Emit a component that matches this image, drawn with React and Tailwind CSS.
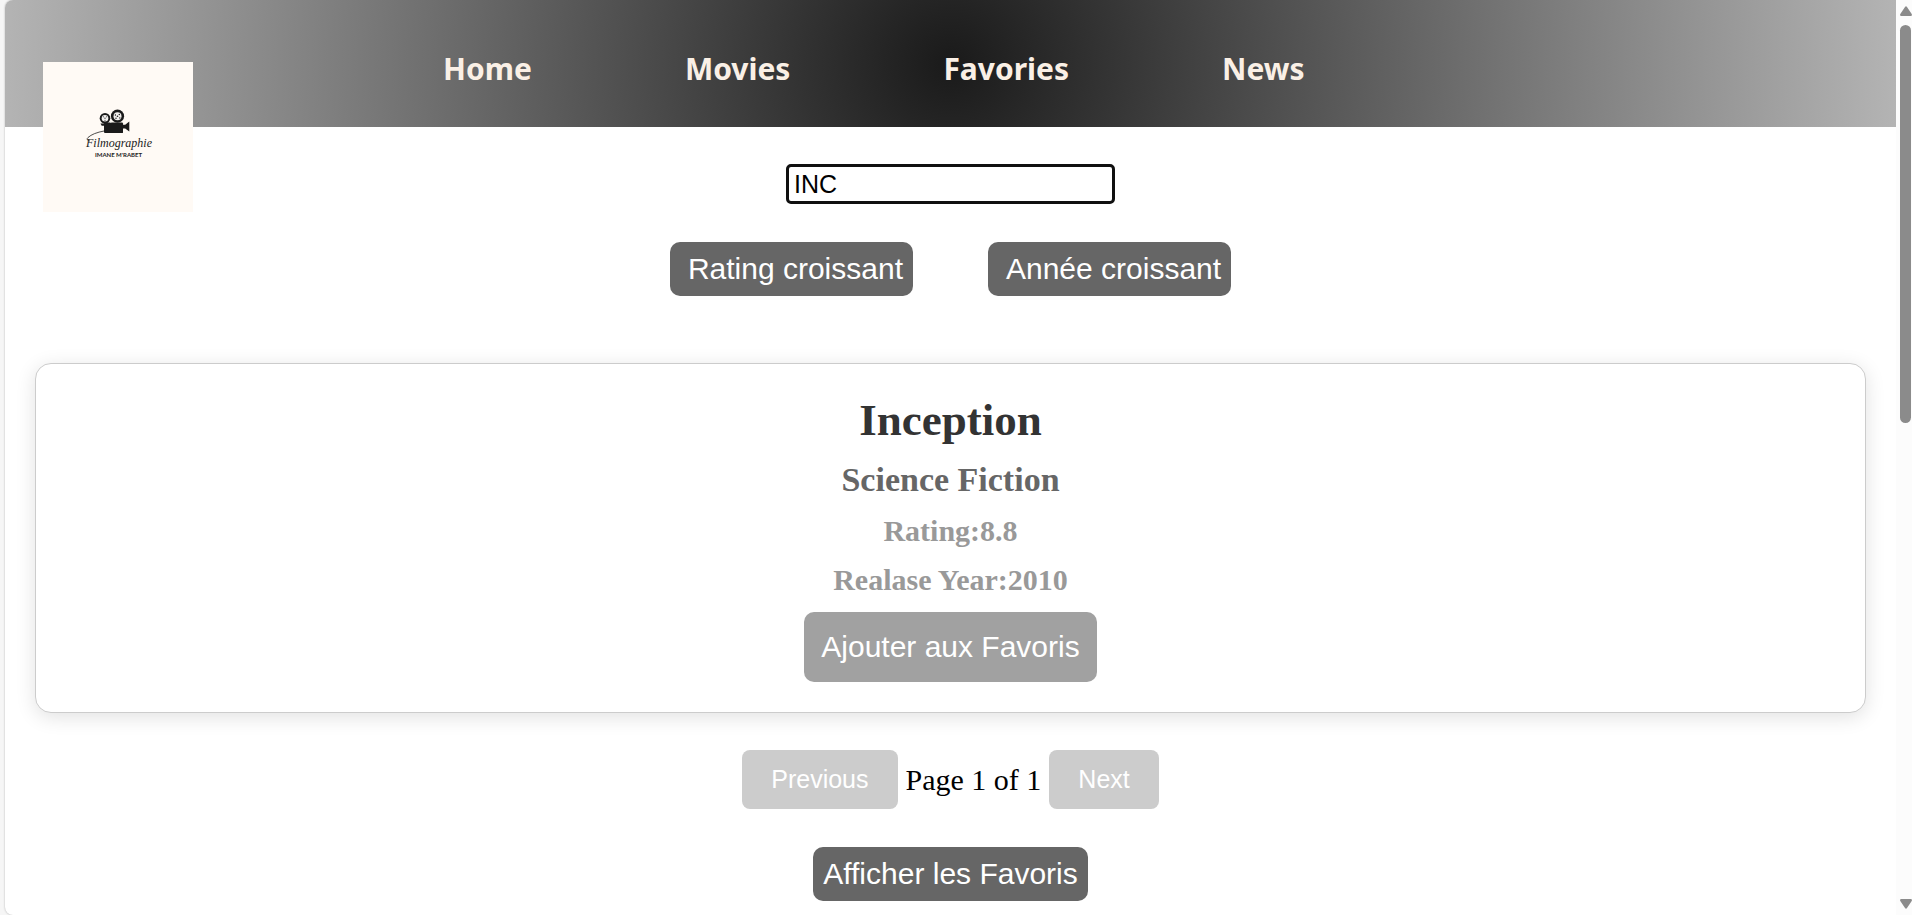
import { useState } from "react";

const links = ["Home", "Movies", "Favories", "News"];

function Logo() {
  return (
    <svg viewBox="0 0 150 150" className="block size-[150px]" role="img" aria-label="Filmographie Imane M'Rabet">
      <rect width="150" height="150" fill="#fffaf5" />
      <g fill="#1a1a1a">
        <circle cx="62" cy="56.2" r="5.300" />
        <circle cx="74.500" cy="54.200" r="6.600" />
        <path d="M61 61.500q0-1 1-1h17q1 0 1 1v9q0 .6-1 .6H62q-1 0-1-1z" />
        <path d="M80 62.800h2.200L86.300 59.500v10L82.200 66.500H80z" />
        <path d="M57.500 61.500h4v2.200h-2.800z" />
      </g>
      <g fill="#f1efed">
        <circle cx="62" cy="56.200" r="3.300" />
        <circle cx="74.500" cy="54.200" r="4" />
        <circle cx="67.800" cy="60" r=".7" />
      </g>
      <g fill="#1a1a1a">
        <circle cx="62" cy="56.200" r=".6" />
        <circle cx="74.500" cy="54.200" r=".8" />
        <circle cx="60.300" cy="54.800" r=".5" />
        <circle cx="63.700" cy="54.800" r=".5" />
        <circle cx="62" cy="58.300" r=".5" />
        <circle cx="72.400" cy="53" r=".7" />
        <circle cx="76.300" cy="52.500" r=".7" />
        <circle cx="73" cy="56.300" r=".7" />
        <circle cx="76.800" cy="55.900" r=".7" />
      </g>
      <path
        d="M46.500 79q-4-1-1.500-3.500 5-4.500 16-6.500"
        fill="none"
        stroke="#222222"
        strokeWidth=".8"
        strokeLinecap="round"
      />
      <text x="76" y="85" textAnchor="middle" fill="#222222" className="font-['Liberation_Serif',serif] text-[12px] italic">
        Filmographie
      </text>
      <text x="75.500" y="95" textAnchor="middle" fill="#222222" className="font-[Lato,sans-serif] text-[6px] font-bold">
        IMANE M'RABET
      </text>
    </svg>
  );
}

function Scrollbar() {
  return (
    <div className="flex w-4 shrink-0 flex-col items-center justify-between bg-[#fcfcfc] py-1.5" aria-hidden="true">
      <div className="ml-[3px] flex flex-col items-center gap-[9px]">
        <svg viewBox="0 0 12 10" className="block h-2.5 w-3 fill-[#8b8b8b]">
          <path d="M5 1q1-1.500 2 0l4.700 7q.8 2-1 2H1.300q-1.800 0-1-2z" />
        </svg>
        <div className="h-[398px] w-[11px] rounded-full bg-[#8b8b8b]" />
      </div>
      <svg viewBox="0 0 12 10" className="ml-[3px] block h-2.5 w-3 fill-[#8b8b8b]">
        <path d="M5 9q1 1.500 2 0l4.700-7q.8-2-1-2H1.300q-1.800 0-1 2z" />
      </svg>
    </div>
  );
}

export default function App() {
  const [query, setQuery] = useState("INC");

  return (
    <div className="flex h-screen overflow-hidden bg-[#f6f6f6] pl-[5px]">
      <div className="min-w-0 flex-1 overflow-hidden rounded-l-lg bg-white font-['Liberation_Serif',serif] shadow-[0_0_2px_#aaaaaa]">
        <header className="flex h-[127px] items-start bg-[radial-gradient(circle,#1a1a1a,#b4b4b4)] pl-[38px]">
          <div className="mt-[62px] shrink-0">
            <Logo />
          </div>
          <nav className="mt-12 ml-[250px] flex gap-[153px] font-['Noto_Sans',sans-serif] text-[30px] leading-[42px] font-bold text-[#faf0e6]">
            {links.map((label) => (
              <a key={label} href={"#" + label.toLowerCase()}>
                {label}
              </a>
            ))}
          </nav>
        </header>

        <main className="flex flex-col items-center px-[30px] pt-[37px]">
          <input
            type="text"
            aria-label="Rechercher un film"
            value={query}
            onChange={(e) => setQuery(e.target.value)}
            className="h-10 w-[329px] rounded-[5px] border-[3px] border-[#101010] bg-white px-[5px] font-['Liberation_Sans',sans-serif] text-[25px] text-black outline-none"
          />

          <div className="mt-[38px] flex gap-[75px] font-['Liberation_Sans',sans-serif] text-[30px] leading-[34px] text-white">
            <button type="button" className="rounded-[10px] bg-[#666666] py-2.5 pr-2.5 pl-[18px]">
              Rating croissant
            </button>
            <button type="button" className="rounded-[10px] bg-[#666666] py-2.5 pr-2.5 pl-[18px]">
              Année croissant
            </button>
          </div>

          <article className="mt-[67px] flex flex-col items-center gap-[15px] self-stretch rounded-2xl border border-[#cccccc] bg-white py-[30px] font-bold shadow-[0_4px_20px_rgba(0,0,0,0.12)]">
            <h2 className="text-[45px] leading-[52px] text-[#333333]">Inception</h2>
            <h3 className="text-[34px] leading-[38px] text-[#666666]">Science Fiction</h3>
            <p className="text-[30px] leading-[34px] text-[#999999]">Rating:8.8</p>
            <p className="text-[30px] leading-[34px] text-[#999999]">Realase Year:2010</p>
            <button
              type="button"
              className="rounded-[10px] bg-[#a1a1a1] px-[17px] py-[18px] font-['Liberation_Sans',sans-serif] text-[30px] leading-[34px] font-normal text-white"
            >
              Ajouter aux Favoris
            </button>
          </article>

          <div className="mt-[37px] flex items-center gap-2 text-[30px] leading-[34px] text-black">
            <button
              type="button"
              disabled
              className="rounded-lg bg-[#cccccc] px-[29px] py-[15px] font-['Liberation_Sans',sans-serif] text-[25px] leading-[29px] text-white"
            >
              Previous
            </button>
            <span>Page 1 of 1</span>
            <button
              type="button"
              disabled
              className="rounded-lg bg-[#cccccc] px-[29px] py-[15px] font-['Liberation_Sans',sans-serif] text-[25px] leading-[29px] text-white"
            >
              Next
            </button>
          </div>

          <button
            type="button"
            className="mt-[38px] rounded-[10px] bg-[#666666] p-2.5 font-['Liberation_Sans',sans-serif] text-[30px] leading-[34px] text-white"
          >
            Afficher les Favoris
          </button>
        </main>
      </div>
      <Scrollbar />
    </div>
  );
}
